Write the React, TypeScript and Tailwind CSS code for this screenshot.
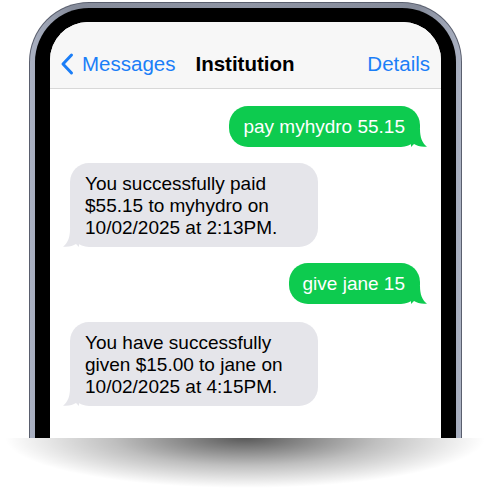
import React from "react";

function Tail({ color, side }: { color: string; side: "left" | "right" }) {
  return (
    <svg
      width="16"
      height="18"
      viewBox="0 0 16 18"
      className={`absolute bottom-0 ${side === "right" ? "-right-[7px]" : "-left-[7px] -scale-x-100"}`}
    >
      <path d="M0 0 H9 C9 8 11 14 16 17.6 C11 18.4 6 17 3 15 C2 16 1 17 0 18 Z" fill={color} />
    </svg>
  );
}

function Sent({ text }: { text: string }) {
  return (
    <div className="flex justify-end pr-[21px]">
      <div className="relative bg-[#0dcb4f] text-white rounded-[19px] pl-[14px] pr-[15px] pt-[10px] pb-[9px] text-[19px] leading-[22px]">
        {text}
        <Tail color="#0dcb4f" side="right" />
      </div>
    </div>
  );
}

function Received({ lines }: { lines: string[] }) {
  return (
    <div className="flex justify-start pl-[20px]">
      <div className="relative bg-[#e5e5ea] text-black rounded-[19px] w-[248px] px-[15px] pt-[10px] pb-[8px] text-[19px] leading-[22px]">
        {lines.map((l, i) => (
          <div key={i}>{l}</div>
        ))}
        <Tail color="#e5e5ea" side="left" />
      </div>
    </div>
  );
}

export default function App() {
  return (
    <div className="w-[490px] h-[489px] bg-white overflow-hidden font-['Liberation_Sans',Arial,sans-serif]">
      {/* phone frame, cut at the bottom */}
      <div className="ml-[29px] mt-[2px] w-[433px] h-[436px] rounded-t-[60px] p-[1px] pb-0 bg-[#5a5f6e]">
        <div className="h-full rounded-t-[59px] px-[5px] pt-[5px] bg-[linear-gradient(90deg,#aab1c2,#858b9a_10%,#8f95a4_50%,#858b9a_90%,#aab1c2)]">
          <div className="h-full rounded-t-[54px] bg-black px-[15px] pt-[14px]">
            <div className="h-full rounded-t-[38px] overflow-hidden bg-white flex flex-col">
              {/* nav bar */}
              <div className="h-[67px] shrink-0 bg-[#f7f7f7] border-b border-[#d8d8d8] grid grid-cols-[1fr_auto_1fr] items-center pl-[10px] pr-[11px] pt-[30px] pb-[13px] text-[20.5px] leading-[23px]">
                <div className="flex items-center h-[23px] text-[#1b7ef7]">
                  <svg width="14" height="22" viewBox="0 0 14 22" className="mr-[8px] shrink-0 overflow-visible">
                    <path d="M11.5 2 L3 11 L11.5 20" fill="none" stroke="#1b7ef7" strokeWidth="3" strokeLinecap="round" strokeLinejoin="round" />
                  </svg>
                  <span>Messages</span>
                </div>
                <div className="font-bold text-black">Institution</div>
                <div className="text-right text-[#1b7ef7]">Details</div>
              </div>

              {/* conversation */}
              <div className="flex flex-col pt-[17px]">
                <Sent text="pay myhydro 55.15" />
                <div className="h-[16px]" />
                <Received lines={["You successfully paid", "$55.15 to myhydro on", "10/02/2025 at 2:13PM."]} />
                <div className="h-[16px]" />
                <Sent text="give jane 15" />
                <div className="h-[18px]" />
                <Received lines={["You have successfully", "given $15.00 to jane on", "10/02/2025 at 4:15PM."]} />
              </div>
            </div>
          </div>
        </div>
      </div>
      {/* shadow beneath */}
      <div className="mx-auto w-[480px] h-[50px] bg-[radial-gradient(ellipse_50%_100%_at_50%_0%,rgba(0,0,0,0.65),rgba(0,0,0,0.25)_55%,rgba(0,0,0,0)_100%)]" />
    </div>
  );
}
